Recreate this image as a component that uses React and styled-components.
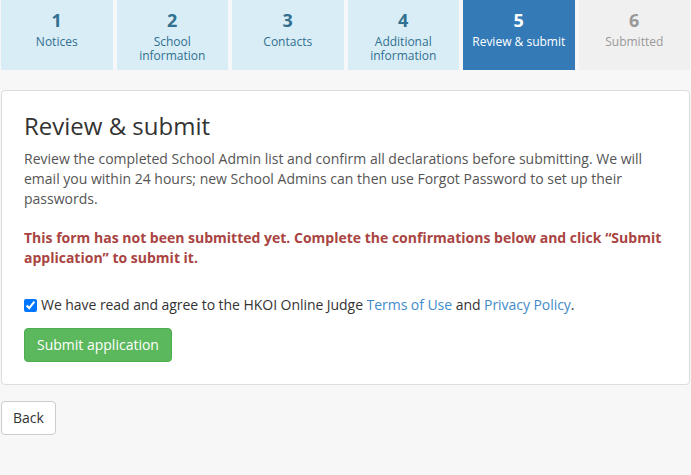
import React from 'react'
import styled, { createGlobalStyle } from 'styled-components'

const GlobalStyle = createGlobalStyle`
    body{
        margin:0;
        background:#f7f7f7;
        font-family:"Open Sans", "Liberation Sans", sans-serif;
        font-size:14px;
        color:#333;
    }
`

const Page = styled.div`
    padding:0 1px;
    min-height:475px;
    box-sizing:border-box;
`

const Steps = styled.div`
    display:grid;
    grid-template-columns:repeat(6, 1fr);
    gap:4px;
    margin-bottom:20px;
`

const stepColors = {
    done: { bg: '#d9edf7', fg: '#31708f' },
    active: { bg: '#337ab7', fg: '#ffffff' },
    todo: { bg: '#f0f0f0', fg: '#999999' },
}

const Step = styled.div`
    height:70px;
    box-sizing:border-box;
    padding-top:8px;
    background:${props => stepColors[props.state].bg};
    color:${props => stepColors[props.state].fg};
    text-align:center;
`
const StepNum = styled.div`
    font-size:18px;
    font-weight:700;
    line-height:24px;
`
const StepLabel = styled.div`
    margin-top:3px;
    font-size:12px;
    line-height:14px;
    padding:0 6px;
`

const Card = styled.div`
    background:#fff;
    border:1px solid #ddd;
    border-radius:4px;
    padding:19px 22px 22px;
`
const Title = styled.h2`
    margin:0 0 7px;
    font-size:24px;
    font-weight:400;
    line-height:32px;
    color:#333;
`
const Desc = styled.p`
    margin:0 0 19px;
    line-height:20px;
    color:#555;
`
const Warning = styled.p`
    margin:0 0 27px;
    line-height:20px;
    font-weight:700;
    color:#a94442;
`
const Agree = styled.label`
    display:flex;
    align-items:center;
    gap:2px;
    line-height:20px;
    margin-bottom:13px;
    letter-spacing:-0.05px;
    input{
        margin:0 2px 0 0;
        width:13px;
        height:13px;
    }
`
const Link = styled.a`
    color:#428bca;
    text-decoration:none;
`
const Button = styled.button`
    font-family:inherit;
    font-size:14px;
    line-height:20px;
    padding:6px ${props => props.primary ? '12px' : '11px'};
    border-radius:4px;
    border:1px solid ${props => props.primary ? '#4cae4c' : '#ccc'};
    background:${props => props.primary ? '#5cb85c' : '#fff'};
    color:${props => props.primary ? '#fff' : '#333'};
    cursor:pointer;
`
const Footer = styled.div`
    margin-top:16px;
`

const steps = [
    { n: 1, label: 'Notices', state: 'done' },
    { n: 2, label: 'School information', state: 'done' },
    { n: 3, label: 'Contacts', state: 'done' },
    { n: 4, label: 'Additional information', state: 'done' },
    { n: 5, label: 'Review & submit', state: 'active' },
    { n: 6, label: 'Submitted', state: 'todo' },
]

const App = () => {
  return (
    <Page>
        <GlobalStyle/>
        <Steps>
            {steps.map(s => (
                <Step key={s.n} state={s.state}>
                    <StepNum>{s.n}</StepNum>
                    <StepLabel>{s.label}</StepLabel>
                </Step>
            ))}
        </Steps>
        <Card>
            <Title>Review &amp; submit</Title>
            <Desc>Review the completed School Admin list and confirm all declarations before submitting. We will
                email you within 24 hours; new School Admins can then use Forgot Password to set up their
                passwords.</Desc>
            <Warning>This form has not been submitted yet. Complete the confirmations below and click “Submit
                application” to submit it.</Warning>
            <Agree>
                <input type='checkbox' defaultChecked/>
                <span>We have read and agree to the HKOI Online Judge <Link href='#'>Terms of Use</Link> and <Link href='#'>Privacy Policy</Link>.</span>
            </Agree>
            <Button primary>Submit application</Button>
        </Card>
        <Footer>
            <Button>Back</Button>
        </Footer>
    </Page>
  )
}

export default App
